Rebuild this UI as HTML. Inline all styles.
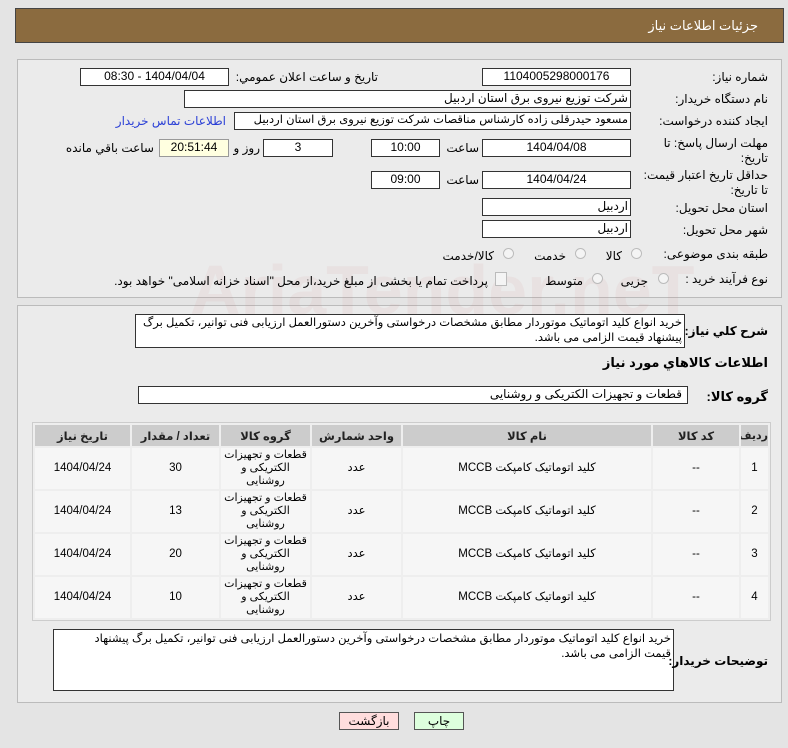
<!DOCTYPE html>
<html><head><meta charset="utf-8"><style>
body{margin:0;width:788px;height:748px;background:#e4e4e4;font-family:"Liberation Sans","DejaVu Sans",sans-serif;font-size:12px;color:#000;position:relative;overflow:hidden}
.a{position:absolute;white-space:nowrap}
.r{direction:rtl}
.box{position:absolute;background:#fff;border:1px solid #333;box-sizing:border-box;font-size:12px;line-height:15px;direction:rtl;overflow:hidden;white-space:nowrap}
.c{text-align:center}
.lbl{position:absolute;direction:rtl;text-align:right;font-size:12px;white-space:nowrap;z-index:2}
.radio{position:absolute;width:11px;height:11px;border-radius:50%;border:1px solid #bbb;background:#f4f4f4;box-sizing:border-box}
table{border-collapse:separate;border-spacing:2px;position:absolute;left:32px;top:422px;width:739px;background:#eee;border:1px solid #ccc;direction:rtl;table-layout:fixed}
th{background:#ccc;height:21px;font-size:11.5px;font-weight:bold;color:#222;padding:0;white-space:nowrap;overflow:hidden}
td{background:#f6f6f6;height:41px;text-align:center;font-size:11.5px;line-height:13px;padding:0;white-space:nowrap;overflow:hidden}
td.g{font-size:11px;line-height:13px}
</style></head><body>
<div class="a" style="left:15px;top:8px;width:769px;height:35px;background:#8b6b3f;border:1px solid #444;box-sizing:border-box"></div>
<div class="a r" style="right:30px;top:18px;color:#fff;font-size:13px">جزئیات اطلاعات نیاز</div>

<div class="a" style="left:17px;top:59px;width:765px;height:239px;border:1px solid #bbb;background:#ebebeb;box-sizing:border-box"></div>
<div class="a" style="left:17px;top:305px;width:765px;height:398px;border:1px solid #bbb;background:#ebebeb;box-sizing:border-box"></div>
<div class="a" style="left:190px;top:250px;font-size:70px;font-weight:bold;color:rgba(200,120,120,0.08)">AriaTender.neT</div>

<div class="lbl" style="right:20px;top:70px">شماره نیاز:</div>
<div class="box c" style="left:482px;top:68px;width:149px;height:18px">1104005298000176</div>
<div class="lbl" style="right:410px;top:70px">تاریخ و ساعت اعلان عمومي:</div>
<div class="box c" style="left:80px;top:68px;width:149px;height:18px">1404/04/04 - 08:30</div>

<div class="lbl" style="right:20px;top:92px">نام دستگاه خریدار:</div>
<div class="box" style="left:184px;top:90px;width:447px;height:18px;padding-right:2px">شرکت توزیع نیروی برق استان اردبیل</div>

<div class="lbl" style="right:20px;top:114px">ایجاد کننده درخواست:</div>
<div class="box" style="left:234px;top:112px;width:397px;height:18px;padding-right:2px;font-size:11.5px">مسعود حیدرقلی زاده کارشناس مناقصات شرکت توزیع نیروی برق استان اردبیل</div>
<div class="lbl" style="right:562px;top:114px;color:#2a3fd6">اطلاعات تماس خریدار</div>

<div class="lbl" style="right:20px;top:136px;line-height:15px">مهلت ارسال پاسخ: تا<br>تاریخ:</div>
<div class="box c" style="left:482px;top:139px;width:149px;height:18px">1404/04/08</div>
<div class="lbl" style="right:309px;top:141px">ساعت</div>
<div class="box c" style="left:371px;top:139px;width:69px;height:18px">10:00</div>
<div class="box c" style="left:263px;top:139px;width:70px;height:18px">3</div>
<div class="lbl" style="right:528px;top:141px">روز و</div>
<div class="box c" style="left:159px;top:139px;width:70px;height:18px;background:#ffffe0;border-color:#999">20:51:44</div>
<div class="lbl" style="right:634px;top:141px">ساعت باقي مانده</div>

<div class="lbl" style="right:20px;top:168px;line-height:15px">حداقل تاریخ اعتبار قیمت:<br>تا تاریخ:</div>
<div class="box c" style="left:482px;top:171px;width:149px;height:18px">1404/04/24</div>
<div class="lbl" style="right:309px;top:173px">ساعت</div>
<div class="box c" style="left:371px;top:171px;width:69px;height:18px">09:00</div>

<div class="lbl" style="right:20px;top:201px">استان محل تحویل:</div>
<div class="box" style="left:482px;top:198px;width:149px;height:18px;padding-right:2px">اردبیل</div>
<div class="lbl" style="right:20px;top:223px">شهر محل تحویل:</div>
<div class="box" style="left:482px;top:220px;width:149px;height:18px;padding-right:2px">اردبیل</div>

<div class="lbl" style="right:20px;top:247px">طبقه بندی موضوعی:</div>
<div class="radio" style="left:631px;top:248px"></div><div class="lbl" style="right:166px;top:249px">کالا</div>
<div class="radio" style="left:575px;top:248px"></div><div class="lbl" style="right:222px;top:249px">خدمت</div>
<div class="radio" style="left:503px;top:248px"></div><div class="lbl" style="right:294px;top:249px">کالا/خدمت</div>

<div class="lbl" style="right:20px;top:272px">نوع فرآیند خرید :</div>
<div class="radio" style="left:658px;top:273px"></div><div class="lbl" style="right:140px;top:274px">جزیی</div>
<div class="radio" style="left:592px;top:273px"></div><div class="lbl" style="right:205px;top:274px">متوسط</div>
<div class="a" style="left:495px;top:272px;width:10px;height:12px;border:1px solid #bbb;background:#f4f4f4"></div>
<div class="lbl" style="right:300px;top:274px">پرداخت تمام یا بخشی از مبلغ خرید،از محل "اسناد خزانه اسلامی" خواهد بود.</div>

<div class="box" style="left:135px;top:314px;width:550px;height:34px;white-space:normal;padding:1px 2px;font-size:11.5px;line-height:15px">خرید انواع کلید اتوماتیک موتوردار مطابق مشخصات درخواستی وآخرین دستورالعمل ارزیابی فنی توانیر، تکمیل برگ پیشنهاد قیمت الزامی می باشد.</div>
<div class="lbl" style="right:20px;top:324px;font-weight:bold;font-size:12px">شرح کلي نیاز:</div>
<div class="lbl" style="right:20px;top:355px;font-weight:bold;font-size:13px">اطلاعات کالاهاي مورد نیاز</div>
<div class="lbl" style="right:20px;top:389px;font-weight:bold;font-size:13px">گروه کالا:</div>
<div class="box" style="left:138px;top:386px;width:550px;height:18px;padding-right:5px">قطعات و تجهیزات الکتریکی و روشنایی</div>

<table>
<colgroup><col style="width:27px"><col style="width:86px"><col style="width:248px"><col style="width:89px"><col style="width:89px"><col style="width:87px"><col></colgroup>
<tr><th style="font-size:11px">ردیف</th><th>کد کالا</th><th>نام کالا</th><th>واحد شمارش</th><th>گروه کالا</th><th>تعداد / مقدار</th><th>تاریخ نیاز</th></tr>
<tr><td>1</td><td>--</td><td>کلید اتوماتیک کامپکت MCCB</td><td>عدد</td><td class="g">قطعات و تجهیزات<br>الکتریکی و<br>روشنایی</td><td>30</td><td>1404/04/24</td></tr>
<tr><td>2</td><td>--</td><td>کلید اتوماتیک کامپکت MCCB</td><td>عدد</td><td class="g">قطعات و تجهیزات<br>الکتریکی و<br>روشنایی</td><td>13</td><td>1404/04/24</td></tr>
<tr><td>3</td><td>--</td><td>کلید اتوماتیک کامپکت MCCB</td><td>عدد</td><td class="g">قطعات و تجهیزات<br>الکتریکی و<br>روشنایی</td><td>20</td><td>1404/04/24</td></tr>
<tr><td>4</td><td>--</td><td>کلید اتوماتیک کامپکت MCCB</td><td>عدد</td><td class="g">قطعات و تجهیزات<br>الکتریکی و<br>روشنایی</td><td>10</td><td>1404/04/24</td></tr>
</table>

<div class="box" style="left:53px;top:629px;width:621px;height:62px;white-space:normal;padding:2px 2px 0 30px;font-size:11.5px">خرید انواع کلید اتوماتیک موتوردار مطابق مشخصات درخواستی وآخرین دستورالعمل ارزیابی فنی توانیر، تکمیل برگ پیشنهاد قیمت الزامی می باشد.</div>
<div class="lbl" style="right:20px;top:654px;font-weight:bold;font-size:12px">توضیحات خریدار:</div>

<div class="a c" style="left:339px;top:712px;width:60px;height:18px;background:#fdd;border:1px solid #555;box-sizing:border-box;line-height:16px">بازگشت</div>
<div class="a c" style="left:414px;top:712px;width:50px;height:18px;background:#dfd;border:1px solid #555;box-sizing:border-box;line-height:16px">چاپ</div>
</body></html>
